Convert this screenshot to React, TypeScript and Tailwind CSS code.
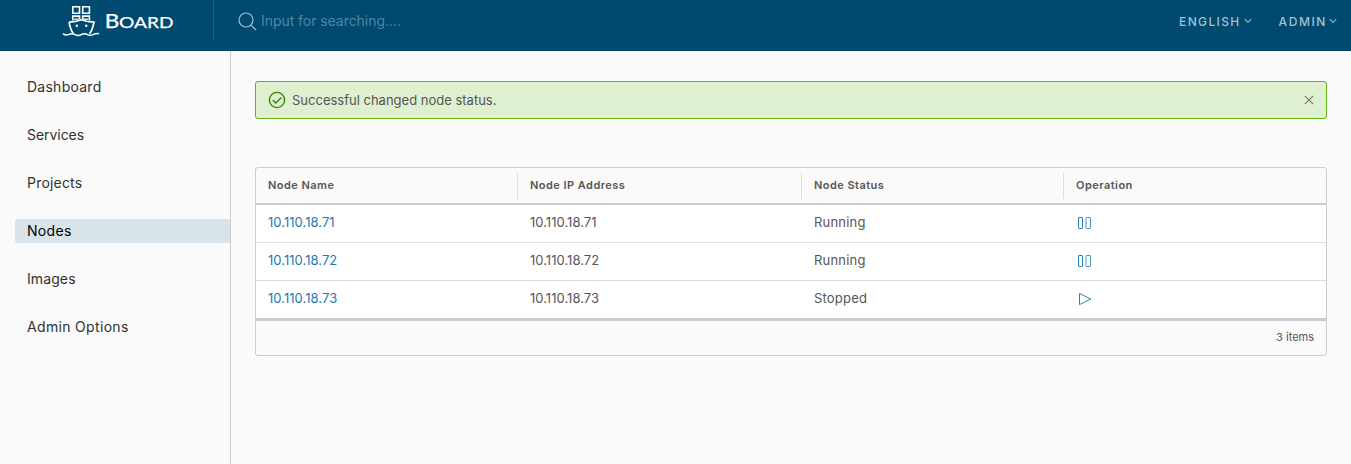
import React from "react";

const menu = [
  { label: "Dashboard", cls: "tracking-[0.25px]" },
  { label: "Services", cls: "tracking-[-0.05px]" },
  { label: "Projects", cls: "tracking-[0.2px]" },
  { label: "Nodes", cls: "tracking-[0.3px]" },
  { label: "Images", cls: "tracking-[0.1px]" },
  { label: "Admin Options", cls: "tracking-[0.33px]" },
];

const nodes = [
  { ip: "10.110.18.71", status: "Running" },
  { ip: "10.110.18.72", status: "Running" },
  { ip: "10.110.18.73", status: "Stopped" },
];

const columns = "grid grid-cols-[261px_284px_262px_1fr]";

function Logo() {
  return (
    <svg width="112" height="36" viewBox="0 0 112 36" fill="none" stroke="#fff" className="mt-[3px] ml-[62px] shrink-0">
      <g strokeWidth="1.6">
        <path d="M10.8 3.8h6.7v6.4h-6.7zM20.7 3.8h6.7v6.4h-6.7z" />
        <path d="M10.8 17.5V13.1h6.7v3M20.7 16V13.1h6.7v4.4" />
        <path d="M12 16.2h5.2M21 16.2h5.2" strokeWidth="1.2" />
        <path d="M7 19.2Q13.5 19 19.3 16.8Q25.5 19 32 19.2L30.8 24Q29.8 28 27.6 30.8M7 19.2L8.2 24Q9.2 28 11.4 30.8" strokeWidth="1.7" />
        <path d="M1 30.6Q4 33 7 31.4Q10 29.8 13 31.6Q16.2 33.4 19.3 31.6Q22.5 29.8 25.5 31.6Q28.5 33.2 31.5 31.4Q34.5 29.8 37 30.8" strokeWidth="1.5" />
      </g>
      <circle cx="14.8" cy="22.8" r="1.2" fill="#fff" stroke="none" />
      <circle cx="24.3" cy="22.8" r="1.2" fill="#fff" stroke="none" />
      <g fill="#fff" strokeWidth="0.25" fontFamily="Lato, sans-serif">
        <text x="42.7" y="25.4" fontSize="18.5" textLength="14.5" lengthAdjust="spacingAndGlyphs">B</text>
        <text x="57" y="25.4" fontSize="15" textLength="54.5" lengthAdjust="spacingAndGlyphs">OARD</text>
      </g>
    </svg>
  );
}

function Caret() {
  return (
    <svg width="8" height="6" viewBox="0 0 8 6" fill="none" stroke="#8fb3c5" strokeWidth="1.1" className="mb-[2px]">
      <path d="M0.8 1.2L4 4.4L7.2 1.2" />
    </svg>
  );
}

function OperationIcon({ running }: { running: boolean }) {
  return (
    <svg width="16" height="16" viewBox="0 0 16 16" fill="none" stroke="#2b82ac" strokeWidth="1">
      {running ? (
        <>
          <rect x="1.5" y="2.5" width="4" height="11" rx="0.4" />
          <rect x="9" y="2.5" width="4.5" height="11" rx="0.4" stroke="#4f9abd" />
        </>
      ) : (
        <path d="M2.5 2.4V13.6L13.8 8Z" strokeLinejoin="round" />
      )}
    </svg>
  );
}

export default function App() {
  return (
    <div className="flex h-[464px] flex-col overflow-hidden bg-[#fafafa] font-[Inter,sans-serif] text-[13px] text-[#565656]">
      <header className="flex h-[51px] shrink-0 bg-[#004a70]">
        <Logo />
        <div className="ml-[39px] flex h-[41px] items-center border-l border-[#1d5f82] pl-6">
          <svg width="19" height="19" viewBox="0 0 19 19" fill="none" stroke="#a3c4d3" strokeWidth="1.2" className="mt-px">
            <circle cx="8" cy="8" r="7" />
            <path d="M13 13.2L18 18.2" />
          </svg>
          <span className="ml-1 text-[14px] tracking-[-0.05px] text-[#4f86a3]">Input for searching....</span>
        </div>
        <div className="ml-auto flex h-[42px] items-center gap-[27px] pt-px pr-[14px] text-[12px] font-medium text-[#a3c0cf]">
          <div className="flex items-center gap-[3px]"><span className="tracking-[1.35px]">ENGLISH</span><Caret /></div>
          <div className="flex items-center gap-[2px]"><span className="tracking-[1.6px]">ADMIN</span><Caret /></div>
        </div>
      </header>
      <div className="flex flex-1">
        <nav className="flex w-[231px] shrink-0 flex-col gap-6 border-r border-[#ccc] pt-6 pl-[15px]">
          {menu.map((m) => (
            <a key={m.label} className={`flex h-6 items-center rounded-l-[3px] pb-0.5 pl-3 text-[14px] ${m.cls} ${m.label === "Nodes" ? "bg-[#d9e4ea] text-black" : "text-[#313131]"}`}>
              {m.label}
            </a>
          ))}
        </nav>
        <main className="flex-1 pt-[30px] pr-6 pl-6">
          <div className="flex h-[38px] items-center rounded-[3px] border border-[#60b515] bg-[#dff0d0] pr-3 pl-3">
            <svg width="18" height="18" viewBox="0 0 18 18" fill="none" stroke="#318700" strokeWidth="1.4">
              <circle cx="9" cy="9" r="7.6" />
              <path d="M4.8 9L7.8 12L13.4 6.4" />
            </svg>
            <span className="ml-[6px] pt-0.5">Successful changed node status.</span>
            <svg width="10" height="10" viewBox="0 0 10 10" className="ml-auto" stroke="#737b6d" strokeWidth="1.1">
              <path d="M0.8 0.8L9.2 9.2M9.2 0.8L0.8 9.2" />
            </svg>
          </div>
          <section className="mt-12 rounded-[3px] border border-[#ccc]">
            <div className={`${columns} h-[37px] items-center border-b-2 border-[#ccc] text-[11px] font-semibold tracking-[0.46px]`}>
              <span className="pl-3">Node Name</span>
              <span className="flex h-[26px] items-center border-l border-[#ddd] pl-3">Node IP Address</span>
              <span className="flex h-[26px] items-center border-l border-[#ddd] pl-3">Node Status</span>
              <span className="flex h-[26px] items-center border-l border-[#ddd] pl-3">Operation</span>
            </div>
            {nodes.map((n, i) => (
              <div key={n.ip} className={`${columns} items-center bg-white ${i < 2 ? "h-[38px] border-b border-[#ddd]" : "h-[37px]"}`}>
                <a className="pb-0.5 pl-3 tracking-[0.05px] text-[#1c79ad]">{n.ip}</a>
                <span className="pb-0.5 pl-[13px] tracking-[0.03px]">{n.ip}</span>
                <span className="pb-0.5 pl-[13px] tracking-[0.2px]">{n.status}</span>
                <span className="flex pb-px pl-[14px]"><OperationIcon running={n.status === "Running"} /></span>
              </div>
            ))}
            <div className="flex h-[37px] items-center justify-end border-t-3 border-[#ccc] pr-3 pb-0.5 text-[11px]">3 items</div>
          </section>
        </main>
      </div>
    </div>
  );
}
